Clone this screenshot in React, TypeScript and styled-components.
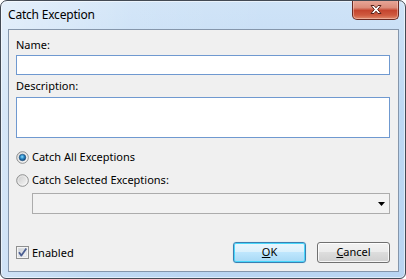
import React from 'react'
import styled, { createGlobalStyle } from 'styled-components'

const GlobalStyle = createGlobalStyle`
  html, body {
    margin: 0;
    padding: 0;
    background: #ffffff;
  }

  body {
    font-family: "Segoe UI", "Noto Sans", sans-serif;
    font-size: 11px;
    color: #000000;
  }
`

const Window = styled.div`
  box-sizing: border-box;
  width: 406px;
  height: 279px;
  border: 1px solid #434a54;
  border-radius: 7px 7px 6px 6px;
  padding: 0 6px 6px 7px;
  display: flex;
  flex-direction: column;
  background:
    linear-gradient(100deg, rgba(255, 255, 255, 0.45) 0%, rgba(255, 255, 255, 0.1) 30%, rgba(255, 255, 255, 0) 60%),
    linear-gradient(to bottom, #cfe3f7 0%, #bdd8f3 40%, #b9d5f2 100%);
  box-shadow: inset 0 0 0 1px rgba(255, 255, 255, 0.55);
  overflow: hidden;
`

const TitleBar = styled.div`
  height: 28px;
  display: flex;
  align-items: flex-start;
  justify-content: space-between;
`

const Title = styled.span`
  margin-top: 6px;
  font-size: 12px;
  line-height: 16px;
  letter-spacing: -0.2px;
  color: #000000;
`

const CloseButton = styled.div`
  box-sizing: border-box;
  width: 47px;
  height: 20px;
  margin-top: -1px;
  border: 1px solid #6b2a22;
  border-top: none;
  border-radius: 0 0 5px 5px;
  display: flex;
  align-items: center;
  justify-content: center;
  background: linear-gradient(to bottom, #e9a99b 0%, #dc8c7a 40%, #c5452f 55%, #cf5a40 80%, #e08a6c 100%);
  box-shadow: inset 0 0 0 1px rgba(255, 220, 210, 0.45);
`

const Client = styled.div`
  flex: 1;
  box-sizing: border-box;
  border: 1px solid #8596ab;
  background: #f0f0f0;
  padding: 0 8px 8px 7px;
  display: flex;
  flex-direction: column;
`

const Label = styled.div<{ $top: number; $bottom: number }>`
  line-height: 16px;
  margin-top: ${p => p.$top}px;
  margin-bottom: ${p => p.$bottom}px;
`

const TextBox = styled.div<{ $height: number }>`
  box-sizing: border-box;
  height: ${p => p.$height}px;
  border: 1px solid #6f99d0;
  background: #ffffff;
`

const OptionRow = styled.div<{ $top: number }>`
  display: flex;
  align-items: center;
  height: 16px;
  margin-top: ${p => p.$top}px;
  line-height: 16px;
`

const Mark = styled.span`
  width: 13px;
  height: 13px;
  margin-right: 3px;
  display: flex;
`

const Combo = styled.div`
  box-sizing: border-box;
  height: 21px;
  margin: 5px 0 0 16px;
  border: 1px solid #acacac;
  background: #f2f2f2;
  display: flex;
  align-items: center;
  justify-content: flex-end;
  padding-right: 4px;
`

const BottomRow = styled.div`
  margin-top: auto;
  display: flex;
  align-items: center;
  height: 22px;
`

const Spacer = styled.div`
  flex: 1;
`

const Button = styled.div<{ $default?: boolean }>`
  box-sizing: border-box;
  width: 73px;
  height: 21px;
  margin-left: ${p => (p.$default ? 0 : 11)}px;
  border: 1px solid ${p => (p.$default ? '#3c7fb1' : '#707070')};
  border-radius: 3px;
  display: flex;
  align-items: center;
  justify-content: center;
  line-height: 16px;
  background: ${p =>
    p.$default
      ? 'linear-gradient(to bottom, #eaf6fd 0%, #d9f0fc 50%, #bee6fd 50%, #a7d9f5 100%)'
      : 'linear-gradient(to bottom, #f2f2f2 0%, #ebebeb 50%, #dddddd 50%, #cfcfcf 100%)'};
  box-shadow: ${p =>
    p.$default
      ? 'inset 0 0 0 1px #48d7fb, 0 0 1px #7fd3f5'
      : 'inset 0 0 0 1px rgba(255, 255, 255, 0.8)'};
`

const Key = styled.span`
  text-decoration: underline;
`

const CloseGlyph = () => (
  <svg width="14" height="11" viewBox="0 0 14 11">
    <path
      d="M2 1.5 L5 1.5 L7 3.8 L9 1.5 L12 1.5 L8.7 5.5 L12 9.5 L9 9.5 L7 7.2 L5 9.5 L2 9.5 L5.3 5.5 Z"
      fill="#ffffff"
      stroke="#5a2119"
      strokeWidth="1"
      strokeLinejoin="round"
    />
  </svg>
)

const Radio = ({ checked }: { checked?: boolean }) => (
  <svg width="13" height="13" viewBox="0 0 13 13">
    <defs>
      <linearGradient id={checked ? 'rOn' : 'rOff'} x1="0" y1="0" x2="1" y2="1">
        <stop offset="0" stopColor="#c7c7c7" />
        <stop offset="1" stopColor="#fbfbfb" />
      </linearGradient>
      <radialGradient id="rDot" cx="0.45" cy="0.4" r="0.6">
        <stop offset="0" stopColor="#8fe0ff" />
        <stop offset="0.5" stopColor="#2a87c4" />
        <stop offset="1" stopColor="#0f3f70" />
      </radialGradient>
    </defs>
    <circle cx="6.5" cy="6.5" r="5.8" fill={`url(#${checked ? 'rOn' : 'rOff'})`} stroke="#8e8f8f" strokeWidth="1" />
    <circle cx="6.5" cy="6.5" r="4.6" fill="none" stroke="#ffffff" strokeOpacity="0.6" strokeWidth="0.8" />
    {checked && <circle cx="6.5" cy="6.5" r="3.3" fill="url(#rDot)" stroke="#1a4c7c" strokeWidth="0.5" />}
  </svg>
)

const CheckBox = () => (
  <svg width="13" height="13" viewBox="0 0 13 13">
    <defs>
      <linearGradient id="cbFill" x1="0" y1="0" x2="1" y2="1">
        <stop offset="0" stopColor="#cbcfd5" />
        <stop offset="1" stopColor="#f7f7f7" />
      </linearGradient>
    </defs>
    <rect x="0.5" y="0.5" width="12" height="12" fill="#f4f4f4" stroke="#8e8f8f" />
    <rect x="2.5" y="2.5" width="8" height="8" fill="url(#cbFill)" stroke="#d8dbe0" strokeWidth="0.6" />
    <path d="M3 6.3 L5.4 9.6 L10.3 2.6" fill="none" stroke="#4c5f92" strokeWidth="1.8" strokeLinejoin="round" />
  </svg>
)

const ComboArrow = () => (
  <svg width="7" height="4" viewBox="0 0 7 4">
    <path d="M0 0 L7 0 L3.5 4 Z" fill="#000000" />
  </svg>
)

export default function App() {
  return (
    <>
      <GlobalStyle />
      <Window>
        <TitleBar>
          <Title>Catch Exception</Title>
          <CloseButton>
            <CloseGlyph />
          </CloseButton>
        </TitleBar>
        <Client>
          <Label $top={7} $bottom={2}>Name:</Label>
          <TextBox $height={20} />
          <Label $top={3} $bottom={3}>Description:</Label>
          <TextBox $height={41} />
          <OptionRow $top={11}>
            <Mark>
              <Radio checked />
            </Mark>
            Catch All Exceptions
          </OptionRow>
          <OptionRow $top={7}>
            <Mark>
              <Radio />
            </Mark>
            Catch Selected Exceptions:
          </OptionRow>
          <Combo>
            <ComboArrow />
          </Combo>
          <BottomRow>
            <Mark>
              <CheckBox />
            </Mark>
            Enabled
            <Spacer />
            <Button $default>
              <Key>O</Key>K
            </Button>
            <Button>
              <Key>C</Key>ancel
            </Button>
          </BottomRow>
        </Client>
      </Window>
    </>
  )
}
